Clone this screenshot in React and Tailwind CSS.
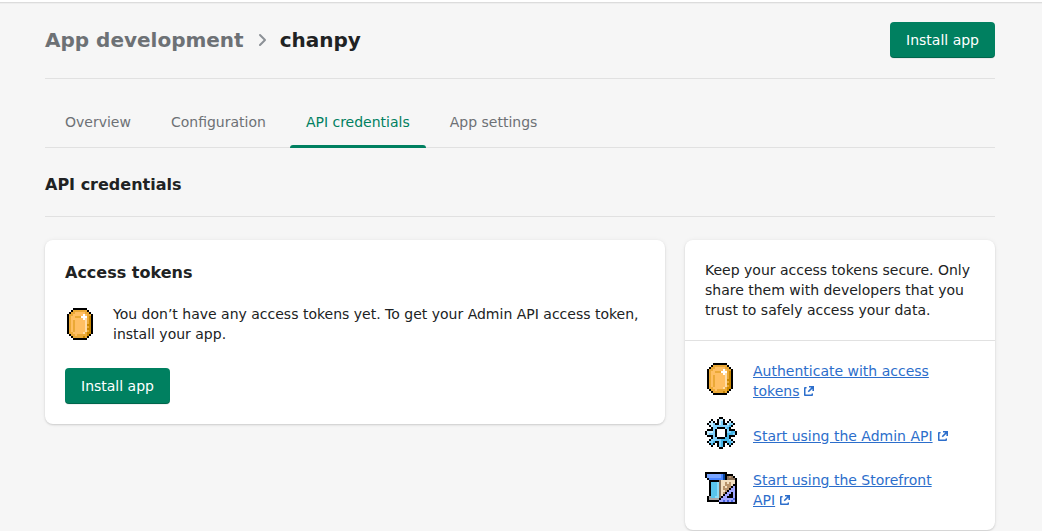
const COIN = {
  rows: [
    '....KKKKKKK.....',
    '...KoooooooK....',
    '..KoolllllooK...',
    '.KoolllllwlooK..',
    '.KollooowwwodK..',
    '.KollllllwpodK..',
    '.KololllllpodK..',
    '.KololllllpodK..',
    '.KololllllpddK..',
    '.KololllllpodK..',
    '.KololllllpddK..',
    '.KololllllpodK..',
    '.KoolllllpoddK..',
    '..KoolooooodK...',
    '...KooooodoK....',
    '....KKKKKKK.....',
  ],
  colors: { K: '#000000', o: '#eba937', l: '#ffbf63', d: '#c98600', p: '#ffdca8', w: '#ffffff' },
};

const GEAR = {
  rows: [
    '.......KK.......',
    '...K..KppK..K...',
    '..KpK.KpbK.KpK..',
    '.KppbKKpbKKpbbK.',
    '..KpbbbbbbbbcK..',
    '...KbbKKKKbcK...',
    '.KKKbKwwwwKbKKK.',
    'KpppbKwwwwKbbccK',
    'KpbbbKwwwwKcccbK',
    '.KKKbKwwwwKcKKK.',
    '...KbbKKKKccK...',
    '..KbbbbbccccbK..',
    '.KbbcKKbcKKccbK.',
    '..KcK.KbcK.KcK..',
    '...K..KbcK..K...',
    '.......KK.......',
  ],
  colors: { K: '#000000', p: '#c5edff', b: '#7fd0fb', c: '#45b5e6', w: '#ffffff' },
};

const STOREFRONT = {
  rows: [
    'KKKKKKKKKKK.....',
    'KuuuuuuuvUKKKK..',
    'KuuuuuuuvUKmnmK.',
    '.KvvvvvvvUKmmmmK',
    '..KKKKKmCCCCCCCK',
    '..KaccdmCCnCnCCK',
    '..KaccdmCCnnnCKK',
    '..KaccdmCnCnnKtK',
    '..KaccdmCnnnKttK',
    '..KaccdmCCnKtttK',
    '..KaccdmCnKttKtK',
    '..KaccdmCKttKKtK',
    '.KgacddmKttKKKtK',
    '.KgggggKttttttxK',
    '.KKKKKKttxtxtxtK',
    '.......KKKKKKKKK',
  ],
  colors: {
    K: '#000000', u: '#79a5ff', v: '#4a85ff', U: '#0b4a9e', C: '#f3dfc0', n: '#b8936b', m: '#8a7159',
    a: '#58c5ec', c: '#58c5ec', d: '#8bdcf8', g: '#a8a8a8', t: '#a0a6ff', x: '#4b66e0',
  },
};

function PixelIcon({ art }) {
  return (
    <svg className="size-8 shrink-0" viewBox="0 0 16 16" shapeRendering="crispEdges" aria-hidden="true">
      {art.rows.flatMap((row, y) =>
        [...row].map((c, x) =>
          c === '.' ? null : <rect key={`${x}-${y}`} x={x} y={y} width="1" height="1" fill={art.colors[c]} />
        )
      )}
    </svg>
  );
}

function InstallButton() {
  return (
    <button
      type="button"
      className="h-9 rounded bg-[#008060] px-4 text-sm leading-5 text-white shadow-[0_1px_0_rgba(0,0,0,0.05),inset_0_-1px_0_rgba(0,0,0,0.2)]"
    >
      Install app
    </button>
  );
}

function ResourceLink({ art, text }) {
  const split = text.lastIndexOf(' ') + 1;
  return (
    <li className="flex items-center gap-4">
      <span className="h-[37px] shrink-0">
        <PixelIcon art={art} />
      </span>
      <a href="#" className="text-[#2c6ecb]">
        <span className="underline">{text.slice(0, split)}</span>
        <span className="whitespace-nowrap">
          <span className="underline">{text.slice(split)}</span>
          <svg className="inline size-5 align-bottom" viewBox="0 0 20 20" fill="currentColor" aria-hidden="true">
            <path d="M14 13v1a1 1 0 0 1-1 1H6c-.575 0-1-.484-1-1V7a1 1 0 0 1 1-1h1c1.037 0 1.04 1.5 0 1.5-.178.005-.353 0-.5 0v6h6V13c0-1 1.5-1 1.5 0z" />
            <path d="M10 5h5v5h-1.600V7.700L9.800 11.300 8.700 10.200 12.300 6.600H10z" />
          </svg>
        </span>
      </a>
    </li>
  );
}

const TABS = ['Overview', 'Configuration', 'API credentials', 'App settings'];
const CARD = 'rounded-lg bg-white shadow-[0_0_5px_rgba(23,24,24,0.05),0_1px_2px_rgba(0,0,0,0.15)]';

export default function App() {
  return (
    <div className="min-h-screen bg-[#f6f6f6] font-['DejaVu_Sans',sans-serif] text-sm leading-5 text-[#202223]">
      <div className="h-[3px] border-b border-[#dcdcdc] bg-white shadow-[0_1px_0_rgba(0,0,0,0.03)]" />
      <div className="pr-[47px] pl-[45px]">
        <header className="flex items-center justify-between border-b border-[#e1e1e1] pt-[19px] pb-5">
          <div className="flex items-center gap-2 text-xl leading-7 font-bold">
            <a href="#" className="text-[#6d7175]">App development</a>
            <svg className="size-5" viewBox="0 0 20 20" fill="#8c9196" aria-hidden="true">
              <path d="M8 16a.999.999 0 0 1-.707-1.707L11.586 10 7.293 5.707a.999.999 0 1 1 1.414-1.414l5 5a.999.999 0 0 1 0 1.414l-5 5A.997.997 0 0 1 8 16z" />
            </svg>
            <h1>chanpy</h1>
          </div>
          <InstallButton />
        </header>

        <nav className="mt-5 flex gap-2 border-b border-[#e1e1e1] px-1">
          {TABS.map((tab) => (
            <a
              key={tab}
              href="#"
              className={
                tab === 'API credentials'
                  ? 'relative px-4 pt-[13px] pb-[15px] text-[#008060] after:absolute after:inset-x-0 after:-bottom-px after:h-[3px] after:rounded-t after:bg-[#008060]'
                  : 'px-4 pt-[13px] pb-[15px] text-[#6d7175]'
              }
            >
              {tab}
            </a>
          ))}
        </nav>

        <h2 className="border-b border-[#e1e1e1] pt-6 pb-[18px] text-base leading-[26px] font-bold">API credentials</h2>

        <main className="mt-[23px] grid grid-cols-[2fr_1fr] items-start gap-5">
          <section className={`${CARD} p-5`}>
            <h3 className="text-base leading-[26px] font-bold">Access tokens</h3>
            <div className="mt-[18px] mb-6 flex items-center gap-4">
              <PixelIcon art={COIN} />
              <p>You don’t have any access tokens yet. To get your Admin API access token, install your app.</p>
            </div>
            <InstallButton />
          </section>

          <aside className={CARD}>
            <p className="p-5">
              Keep your access tokens secure. Only share them with developers that you trust to safely access your data.
            </p>
            <ul className="flex flex-col gap-4 border-t border-[#e1e1e1] p-5">
              <ResourceLink art={COIN} text="Authenticate with access tokens" />
              <ResourceLink art={GEAR} text="Start using the Admin API" />
              <ResourceLink art={STOREFRONT} text="Start using the Storefront API" />
            </ul>
          </aside>
        </main>
      </div>
    </div>
  );
}
